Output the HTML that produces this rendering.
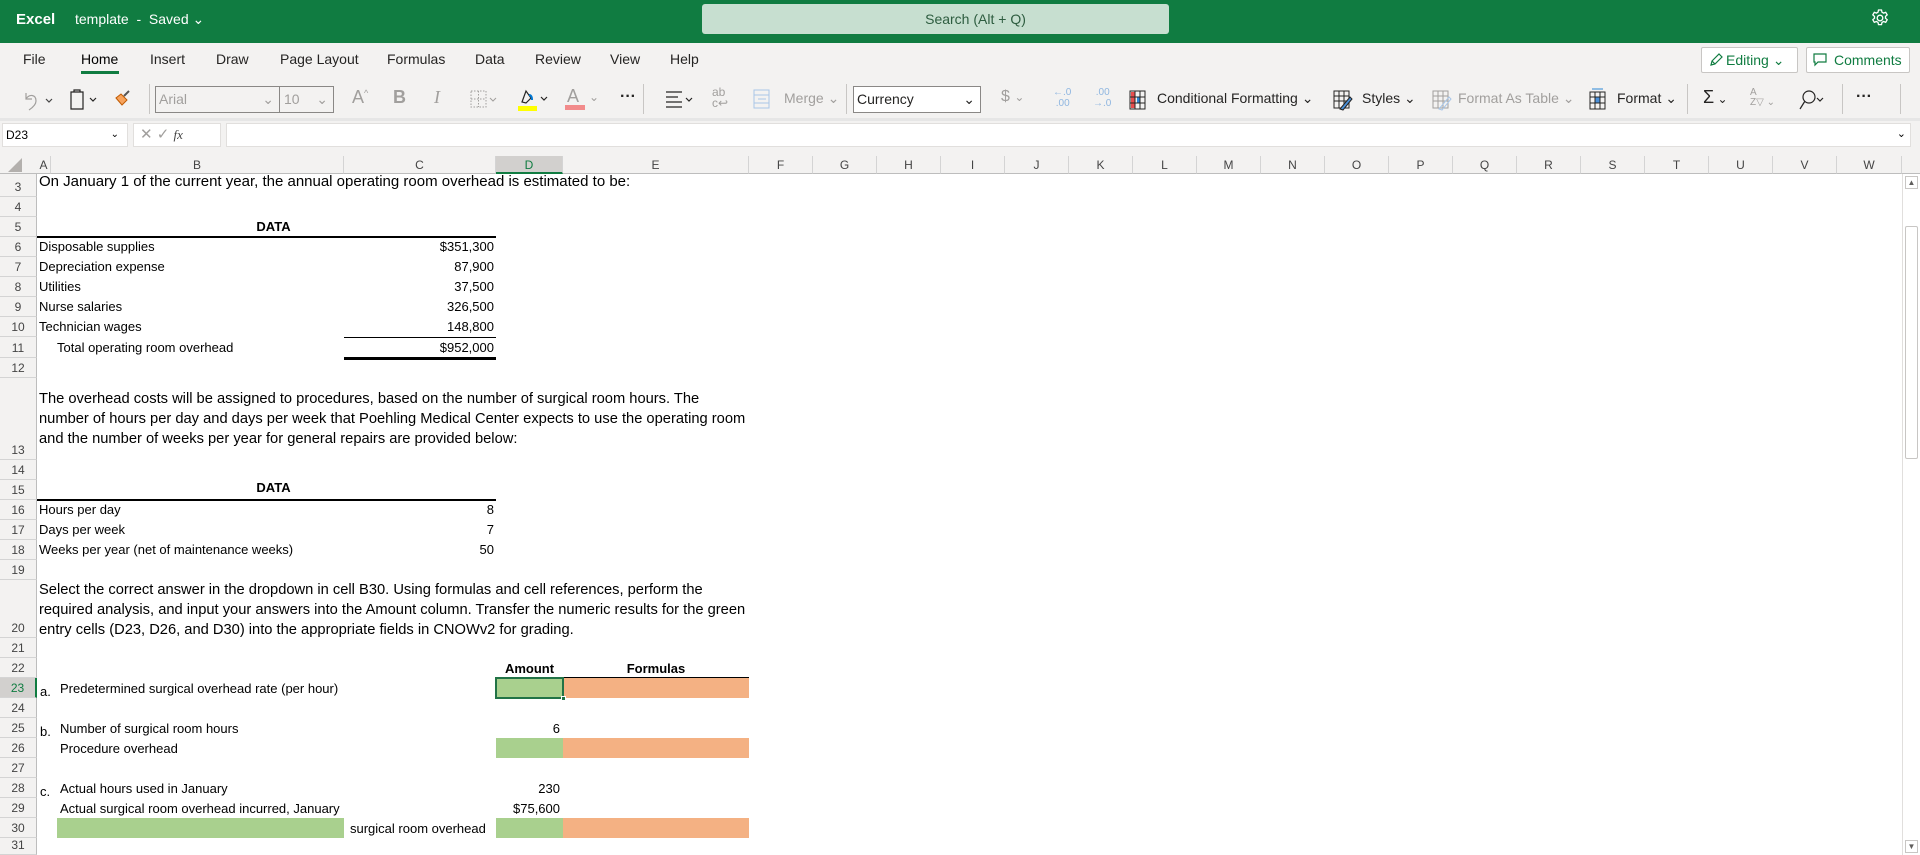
<!DOCTYPE html>
<html><head><meta charset="utf-8"><style>
*{box-sizing:border-box;margin:0;padding:0}
body{width:1920px;height:855px;overflow:hidden;background:#fff;font-family:"Liberation Sans",Arial,sans-serif;position:relative;color:#000}
.a{position:absolute;white-space:nowrap}
.hdr{left:0;top:0;width:1920px;height:43px;background:#107c41}
.tabs{left:0;top:43px;width:1920px;height:79px;background:#f3f2f1}
.tab{font-size:14px;color:#252423;top:51px}
.rb{font-size:14px;color:#252423;top:90px}
.dis{color:#a19f9d}
.sep{width:1px;height:30px;background:#c8c6c4;top:84px}
.cell{font-size:13px;font-family:"Liberation Sans",Arial,sans-serif}
.rh{position:absolute;left:0;width:37px;border-bottom:1px solid #d4d4d4;border-right:1px solid #bdbdbd;background:#f3f2f1;font-size:12px;color:#444;text-align:center;display:flex;align-items:flex-end;justify-content:center;padding-bottom:2px}
.ch{position:absolute;top:156px;height:18px;border-right:1px solid #d4d4d4;font-size:12px;color:#444;text-align:center;line-height:18px;background:#f3f2f1;border-bottom:1px solid #bdbdbd}
.p15{font-size:14.7px;line-height:20px}
.g{background:#a9d08e;position:absolute}
.o{background:#f4b183;position:absolute}
</style></head><body>
<div class="a hdr"></div>
<div class="a" style="left:16px;top:11px;color:#fff;font-weight:bold;font-size:15px">Excel</div>
<div class="a" style="left:75px;top:11px;color:#fff;font-size:14px">template&nbsp; - &nbsp;Saved ⌄</div>
<div class="a" style="left:702px;top:4px;width:467px;height:30px;background:#c7dfd0;border-radius:3px;color:#2e5d40;font-size:14px;line-height:30px;padding-left:80px;text-align:center">Search (Alt + Q)</div>
<svg class="a" style="left:1870px;top:8px" width="20" height="20" viewBox="0 0 20 20" fill="none" stroke="#fff" stroke-width="1.3"><circle cx="10" cy="10" r="2.8"/><path d="M8.5 2h3l.5 2.2 1.6.9 2.1-.8 1.5 2.6-1.7 1.5v1.8l1.7 1.5-1.5 2.6-2.1-.8-1.6.9-.5 2.2h-3l-.5-2.2-1.6-.9-2.1.8-1.5-2.6 1.7-1.5V8.4L2.8 6.9l1.5-2.6 2.1.8 1.6-.9z"/></svg>

<div class="a tabs"></div>
<div class="a tab" style="left:23px">File</div>
<div class="a tab" style="left:81px;color:#000">Home</div>
<div class="a" style="left:81px;top:71px;width:38px;height:3px;background:#107c41"></div>
<div class="a tab" style="left:150px">Insert</div>
<div class="a tab" style="left:216px">Draw</div>
<div class="a tab" style="left:280px">Page Layout</div>
<div class="a tab" style="left:387px">Formulas</div>
<div class="a tab" style="left:475px">Data</div>
<div class="a tab" style="left:535px">Review</div>
<div class="a tab" style="left:610px">View</div>
<div class="a tab" style="left:670px">Help</div>
<div class="a" style="left:1701px;top:47px;width:97px;height:26px;background:#fff;border:1px solid #c8c6c4;border-radius:2px;font-size:14px;color:#107c41;line-height:24px;padding-left:24px">Editing ⌄</div>
<svg class="a" style="left:1708px;top:52px" width="16" height="16" viewBox="0 0 16 16" fill="none" stroke="#107c41" stroke-width="1.2"><path d="M3 13l1-4 7-7 3 3-7 7zM4 9l3 3"/></svg>
<div class="a" style="left:1806px;top:47px;width:104px;height:26px;background:#fff;border:1px solid #c8c6c4;border-radius:2px;font-size:14px;color:#107c41;line-height:24px;padding-left:27px">Comments</div>
<svg class="a" style="left:1812px;top:52px" width="16" height="16" viewBox="0 0 16 16" fill="none" stroke="#107c41" stroke-width="1.2"><path d="M2 2h12v8H6l-3 3v-3H2z"/></svg>

<!-- ribbon -->
<div class="a" style="left:0;top:118px;width:1920px;height:3px;background:#e6e6e6"></div>
<svg class="a" style="left:20px;top:89px" width="36" height="22" viewBox="0 0 36 22" fill="none" stroke="#a19f9d" stroke-width="1.2"><path d="M6 4v6h6M6 10c3-5 10-5 10 2 0 4-4 7-7 9"/><path d="M26 10l3 3 3-3" stroke="#444"/></svg>
<svg class="a" style="left:68px;top:88px" width="36" height="24" viewBox="0 0 36 24" fill="none" stroke="#252423" stroke-width="1.2"><path d="M3 4h12v17H3zM6 4V2h6v2"/><path d="M22 10l3 3 3-3"/></svg>
<svg class="a" style="left:112px;top:88px" width="20" height="22" viewBox="0 0 20 22"><path d="M4 10l6 7 5-5-6-6z" fill="#f7a35c" stroke="#c05a00"/><path d="M12 8l5-5" stroke="#555" stroke-width="2"/></svg>
<div class="a sep" style="left:149px"></div>
<div class="a" style="left:155px;top:86px;width:125px;height:27px;border:1px solid #8a8886;font-size:14px;color:#a19f9d;line-height:25px;padding-left:3px">Arial<span style="position:absolute;right:5px">⌄</span></div>
<div class="a" style="left:279px;top:86px;width:55px;height:27px;border:1px solid #8a8886;font-size:14px;color:#a19f9d;line-height:25px;padding-left:4px">10<span style="position:absolute;right:5px">⌄</span></div>
<div class="a rb dis" style="left:352px;top:87px;font-size:18px">A<sup style="font-size:9px">^</sup></div>
<div class="a rb dis" style="left:393px;top:87px;font-size:18px;font-weight:bold">B</div>
<div class="a rb dis" style="left:434px;top:87px;font-size:18px;font-style:italic;font-family:'Liberation Serif',serif">I</div>
<svg class="a" style="left:470px;top:90px" width="36" height="20" viewBox="0 0 36 20" fill="none" stroke="#a19f9d" stroke-dasharray="1.5 1.5"><rect x="1" y="1" width="15" height="16"/><path d="M8.5 1v16M1 9h15"/><path d="M20 8l3 3 3-3" stroke-dasharray="none"/></svg>
<svg class="a" style="left:517px;top:87px" width="36" height="26" viewBox="0 0 36 26" fill="none" stroke="#252423" stroke-width="1.2"><path d="M5 15l4-11 5 7-5 5z"/><path d="M12 8c2 0 3 2 3 5" stroke="#0078d4" stroke-width="2"/><rect x="1" y="19" width="19" height="5" fill="#ffff00" stroke="none"/><path d="M24 10l3 3 3-3"/></svg>
<div class="a" style="left:567px;top:86px;font-size:18px;color:#a19f9d">A</div>
<div class="a" style="left:565px;top:105px;width:20px;height:5px;background:#f28b8b"></div>
<div class="a dis" style="left:589px;top:90px;font-size:12px">⌄</div>
<div class="a" style="left:620px;top:88px;font-size:16px;color:#252423;font-weight:bold">···</div>
<div class="a sep" style="left:643px"></div>
<svg class="a" style="left:664px;top:89px" width="36" height="22" viewBox="0 0 36 22" fill="none" stroke="#252423" stroke-width="1.2"><path d="M2 3h16M2 8h12M2 13h16M2 18h16"/><path d="M22 9l3 3 3-3"/></svg>
<div class="a dis" style="left:712px;top:87px;font-size:12px;line-height:11px">ab<br>c↩</div>
<svg class="a" style="left:752px;top:88px" width="20" height="22" viewBox="0 0 20 22" fill="none" stroke="#a9c6e8"><rect x="2" y="2" width="15" height="18"/><path d="M2 7h15M2 15h15M6 11h8"/></svg>
<div class="a rb dis" style="left:784px">Merge ⌄</div>
<div class="a sep" style="left:846px"></div>
<div class="a" style="left:853px;top:86px;width:128px;height:27px;border:1px solid #8a8886;background:#fff;font-size:14px;color:#252423;line-height:25px;padding-left:3px">Currency<span style="position:absolute;right:5px">⌄</span></div>
<div class="a rb dis" style="left:1001px;font-size:16px;top:88px">$ <span style="font-size:12px">⌄</span></div>
<div class="a dis" style="left:1053px;top:87px;font-size:10px;line-height:11px;color:#8fb6e0">←.0<br>&nbsp;.00</div>
<div class="a dis" style="left:1093px;top:87px;font-size:10px;line-height:11px;color:#8fb6e0">&nbsp;.00<br>→.0</div>
<svg class="a" style="left:1128px;top:89px" width="20" height="22" viewBox="0 0 20 22" fill="none" stroke="#252423"><rect x="2" y="2" width="15" height="18"/><rect x="3" y="3" width="4" height="16" fill="#e84d4d" stroke="none"/><rect x="9" y="8" width="3" height="6" fill="#2b88d8" stroke="none"/><path d="M2 8h15M2 14h15M7 2v18M12 2v18"/></svg>
<div class="a rb" style="left:1157px">Conditional Formatting ⌄</div>
<svg class="a" style="left:1332px;top:89px" width="22" height="22" viewBox="0 0 22 22" fill="none" stroke="#252423"><rect x="2" y="2" width="15" height="17"/><path d="M2 7h15M2 12h15M7 2v17M12 2v17"/><path d="M8 20l10-12 2 2-9 11z" fill="#4a90d9"/></svg>
<div class="a rb" style="left:1362px">Styles ⌄</div>
<svg class="a" style="left:1431px;top:89px" width="22" height="22" viewBox="0 0 22 22" fill="none" stroke="#a19f9d"><rect x="2" y="2" width="15" height="17"/><path d="M2 7h15M2 12h15M7 2v17M12 2v17"/><path d="M8 20l10-12 2 2-9 11z" stroke="#a9c6e8"/></svg>
<div class="a rb dis" style="left:1458px">Format As Table ⌄</div>
<svg class="a" style="left:1588px;top:88px" width="20" height="22" viewBox="0 0 20 22" fill="none" stroke="#252423"><rect x="2" y="4" width="15" height="17"/><path d="M2 9h15M2 15h15M7 4v17M12 4v17"/><rect x="7" y="9" width="5" height="6" fill="#4a90d9"/><path d="M4 1h11" stroke="#2b88d8"/></svg>
<div class="a rb" style="left:1617px">Format ⌄</div>
<div class="a sep" style="left:1687px"></div>
<div class="a rb" style="left:1703px;font-size:18px;top:87px">Σ<span style="font-size:12px"> ⌄</span></div>
<div class="a dis" style="left:1750px;top:88px;font-size:10px;line-height:10px">A<br>Z▽ ⌄</div>
<svg class="a" style="left:1798px;top:89px" width="30" height="22" viewBox="0 0 30 22" fill="none" stroke="#252423" stroke-width="1.2"><circle cx="11" cy="8" r="6"/><path d="M7 12l-5 8"/><path d="M19 9l3 3 3-3"/></svg>
<div class="a sep" style="left:1842px"></div>
<div class="a" style="left:1856px;top:88px;font-size:16px;color:#252423;font-weight:bold">···</div>
<div class="a sep" style="left:1900px"></div>

<!-- formula bar -->
<div class="a" style="left:0;top:121px;width:1920px;height:34px;background:#f3f2f1"></div>
<div class="a" style="left:2px;top:123px;width:126px;height:24px;background:#fff;border:1px solid #e1dfdd;font-size:12px;line-height:22px;padding-left:3px">D23<span style="position:absolute;right:8px;font-size:10px">⌄</span></div>
<div class="a" style="left:133px;top:123px;width:88px;height:24px;background:#fff;border:1px solid #e1dfdd;font-size:15px;color:#a19f9d;line-height:22px;padding-left:6px">✕ ✓ <i style="color:#444;font-family:'Liberation Serif',serif;font-size:13px">fx</i></div>
<div class="a" style="left:226px;top:123px;width:1685px;height:24px;background:#fff;border:1px solid #e1dfdd"><span style="position:absolute;right:4px;top:3px;font-size:11px">⌄</span></div>

<!-- column headers -->
<div class="a" style="left:0;top:155px;width:1920px;height:19px;background:#f3f2f1;border-bottom:1px solid #bdbdbd"></div>
<div class="a" style="left:8px;top:158px;width:0;height:0;border-left:14px solid transparent;border-bottom:14px solid #b3b0ad"></div>
<div class="ch" style="left:37px;width:14px">A</div>
<div class="ch" style="left:51px;width:293px">B</div>
<div class="ch" style="left:344px;width:152px">C</div>
<div class="ch" style="left:496px;width:67px;background:#d2d0ce;color:#107c41;border-bottom:2px solid #107c41">D</div>
<div class="ch" style="left:563px;width:186px">E</div>
<div class="ch" style="left:749px;width:64px">F</div>
<div class="ch" style="left:813px;width:64px">G</div>
<div class="ch" style="left:877px;width:64px">H</div>
<div class="ch" style="left:941px;width:64px">I</div>
<div class="ch" style="left:1005px;width:64px">J</div>
<div class="ch" style="left:1069px;width:64px">K</div>
<div class="ch" style="left:1133px;width:64px">L</div>
<div class="ch" style="left:1197px;width:64px">M</div>
<div class="ch" style="left:1261px;width:64px">N</div>
<div class="ch" style="left:1325px;width:64px">O</div>
<div class="ch" style="left:1389px;width:64px">P</div>
<div class="ch" style="left:1453px;width:64px">Q</div>
<div class="ch" style="left:1517px;width:64px">R</div>
<div class="ch" style="left:1581px;width:64px">S</div>
<div class="ch" style="left:1645px;width:64px">T</div>
<div class="ch" style="left:1709px;width:64px">U</div>
<div class="ch" style="left:1773px;width:64px">V</div>
<div class="ch" style="left:1837px;width:65px">W</div>

<!-- row headers -->
<div class="rh" style="top:174px;height:23px">3</div>
<div class="rh" style="top:197px;height:20px">4</div>
<div class="rh" style="top:217px;height:20px">5</div>
<div class="rh" style="top:237px;height:20px">6</div>
<div class="rh" style="top:257px;height:20px">7</div>
<div class="rh" style="top:277px;height:20px">8</div>
<div class="rh" style="top:297px;height:20px">9</div>
<div class="rh" style="top:317px;height:20px">10</div>
<div class="rh" style="top:337px;height:21px">11</div>
<div class="rh" style="top:358px;height:20px">12</div>
<div class="rh" style="top:378px;height:82px">13</div>
<div class="rh" style="top:460px;height:20px">14</div>
<div class="rh" style="top:480px;height:20px">15</div>
<div class="rh" style="top:500px;height:20px">16</div>
<div class="rh" style="top:520px;height:20px">17</div>
<div class="rh" style="top:540px;height:20px">18</div>
<div class="rh" style="top:560px;height:20px">19</div>
<div class="rh" style="top:580px;height:58px">20</div>
<div class="rh" style="top:638px;height:20px">21</div>
<div class="rh" style="top:658px;height:20px">22</div>
<div class="rh" style="top:678px;height:20px;background:#d2d0ce;color:#107c41;border-right:2px solid #107c41">23</div>
<div class="rh" style="top:698px;height:20px">24</div>
<div class="rh" style="top:718px;height:20px">25</div>
<div class="rh" style="top:738px;height:20px">26</div>
<div class="rh" style="top:758px;height:20px">27</div>
<div class="rh" style="top:778px;height:20px">28</div>
<div class="rh" style="top:798px;height:20px">29</div>
<div class="rh" style="top:818px;height:20px">30</div>
<div class="rh" style="top:838px;height:17px">31</div>

<!-- content -->
<div class="a" style="left:39px;top:173px;font-size:15px">On January 1 of the current year, the annual operating room overhead is estimated to be:</div>
<div class="a cell" style="left:51px;width:445px;top:219px;text-align:center;font-weight:bold">DATA</div>
<div class="a" style="left:37px;top:236px;width:459px;height:2px;background:#000"></div>
<div class="a cell" style="left:39px;top:239px">Disposable supplies</div>
<div class="a cell" style="left:39px;top:259px">Depreciation expense</div>
<div class="a cell" style="left:39px;top:279px">Utilities</div>
<div class="a cell" style="left:39px;top:299px">Nurse salaries</div>
<div class="a cell" style="left:39px;top:319px">Technician wages</div>
<div class="a cell" style="left:57px;top:340px">Total operating room overhead</div>
<div class="a cell" style="left:344px;width:150px;top:239px;text-align:right">$351,300</div>
<div class="a cell" style="left:344px;width:150px;top:259px;text-align:right">87,900</div>
<div class="a cell" style="left:344px;width:150px;top:279px;text-align:right">37,500</div>
<div class="a cell" style="left:344px;width:150px;top:299px;text-align:right">326,500</div>
<div class="a cell" style="left:344px;width:150px;top:319px;text-align:right">148,800</div>
<div class="a" style="left:344px;top:337px;width:152px;height:1px;background:#000"></div>
<div class="a cell" style="left:344px;width:150px;top:340px;text-align:right">$952,000</div>
<div class="a" style="left:344px;top:357px;width:152px;height:3px;background:#000"></div>

<div class="a p15" style="left:39px;top:389px">The overhead costs will be assigned to procedures, based on the number of surgical room hours. The<br>number of hours per day and days per week that Poehling Medical Center expects to use the operating room<br>and the number of weeks per year for general repairs are provided below:</div>

<div class="a cell" style="left:51px;width:445px;top:480px;text-align:center;font-weight:bold">DATA</div>
<div class="a" style="left:37px;top:499px;width:459px;height:2px;background:#000"></div>
<div class="a cell" style="left:39px;top:502px">Hours per day</div>
<div class="a cell" style="left:39px;top:522px">Days per week</div>
<div class="a cell" style="left:39px;top:542px">Weeks per year (net of maintenance weeks)</div>
<div class="a cell" style="left:344px;width:150px;top:502px;text-align:right">8</div>
<div class="a cell" style="left:344px;width:150px;top:522px;text-align:right">7</div>
<div class="a cell" style="left:344px;width:150px;top:542px;text-align:right">50</div>

<div class="a p15" style="left:39px;top:580px">Select the correct answer in the dropdown in cell B30. Using formulas and cell references, perform the<br>required analysis, and input your answers into the Amount column. Transfer the numeric results for the green<br>entry cells (D23, D26, and D30) into the appropriate fields in CNOWv2 for grading.</div>

<div class="a cell" style="left:496px;width:67px;top:661px;text-align:center;font-weight:bold">Amount</div>
<div class="a cell" style="left:563px;width:186px;top:661px;text-align:center;font-weight:bold">Formulas</div>
<div class="a" style="left:563px;top:677px;width:186px;height:1px;background:#000"></div>

<div class="a cell" style="left:40px;top:684px">a.</div>
<div class="a cell" style="left:60px;top:681px">Predetermined surgical overhead rate (per hour)</div>
<div class="g" style="left:496px;top:678px;width:67px;height:20px"></div>
<div class="o" style="left:563px;top:678px;width:186px;height:20px"></div>
<div class="a" style="left:495px;top:677px;width:69px;height:22px;border:2px solid #217346"></div>
<div class="a" style="left:561px;top:696px;width:5px;height:5px;background:#217346;border:1px solid #fff"></div>

<div class="a cell" style="left:40px;top:724px">b.</div>
<div class="a cell" style="left:60px;top:721px">Number of surgical room hours</div>
<div class="a cell" style="left:496px;width:64px;top:721px;text-align:right">6</div>
<div class="a cell" style="left:60px;top:741px">Procedure overhead</div>
<div class="g" style="left:496px;top:738px;width:67px;height:20px"></div>
<div class="o" style="left:563px;top:738px;width:186px;height:20px"></div>

<div class="a cell" style="left:40px;top:784px">c.</div>
<div class="a cell" style="left:60px;top:781px">Actual hours used in January</div>
<div class="a cell" style="left:440px;width:120px;top:781px;text-align:right">230</div>
<div class="a cell" style="left:60px;top:801px">Actual surgical room overhead incurred, January</div>
<div class="a cell" style="left:440px;width:120px;top:801px;text-align:right">$75,600</div>
<div class="g" style="left:57px;top:818px;width:287px;height:20px"></div>
<div class="a cell" style="left:350px;top:821px">surgical room overhead</div>
<div class="g" style="left:496px;top:818px;width:67px;height:20px"></div>
<div class="o" style="left:563px;top:818px;width:186px;height:20px"></div>

<!-- scrollbar -->
<div class="a" style="left:1902px;top:174px;width:18px;height:681px;background:#fff;border-left:1px solid #e1dfdd"></div>
<div class="a" style="left:1905px;top:176px;width:13px;height:13px;border:1px solid #c8c6c4;font-size:8px;text-align:center;line-height:11px;color:#605e5c">▲</div>
<div class="a" style="left:1905px;top:226px;width:13px;height:233px;border:1px solid #c8c6c4;background:#fff;border-radius:2px"></div>
<div class="a" style="left:1905px;top:840px;width:13px;height:13px;border:1px solid #c8c6c4;font-size:8px;text-align:center;line-height:11px;color:#605e5c">▼</div>
</body></html>
